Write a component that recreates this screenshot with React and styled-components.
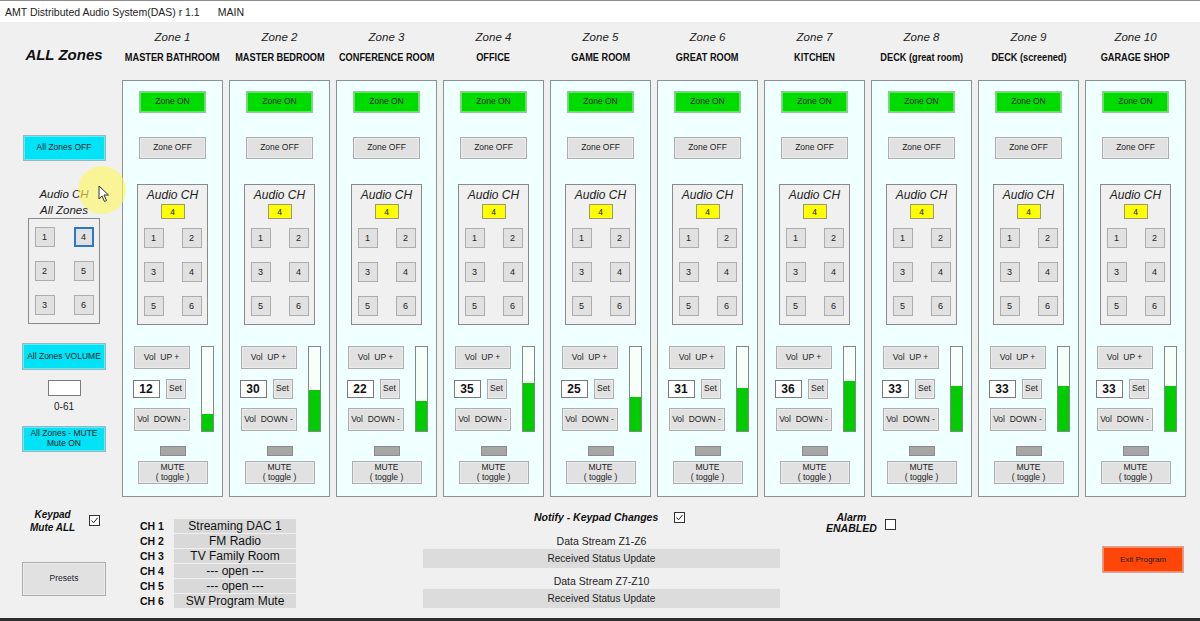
import React from "react";
import styled, { createGlobalStyle, css } from "styled-components";

const GlobalStyle = createGlobalStyle`
  html, body {
    margin: 0;
    padding: 0;
    background: #f0f0f0;
  }
  * {
    box-sizing: border-box;
  }
`;

const UI_FONT = `"Liberation Sans", Arial, sans-serif`;

const zones = [
  { name: "MASTER BATHROOM", vol: 12 },
  { name: "MASTER BEDROOM", vol: 30 },
  { name: "CONFERENCE ROOM", vol: 22 },
  { name: "OFFICE", vol: 35 },
  { name: "GAME ROOM", vol: 25 },
  { name: "GREAT ROOM", vol: 31 },
  { name: "KITCHEN", vol: 36 },
  { name: "DECK (great room)", vol: 33 },
  { name: "DECK (screened)", vol: 33 },
  { name: "GARAGE SHOP", vol: 33 },
];

const channels = [
  "Streaming DAC 1",
  "FM Radio",
  "TV Family Room",
  "--- open ---",
  "--- open ---",
  "SW Program Mute",
];

const Window = styled.div`
  position: relative;
  width: 1200px;
  height: 621px;
  overflow: hidden;
  background: #f0f0f0;
  border-bottom: 3px solid #2e2e2e;
  font-family: ${UI_FONT};
  color: #111;
`;

const TitleBar = styled.div`
  display: flex;
  align-items: center;
  height: 22px;
  padding-left: 5px;
  background: #fff;
  border-top: 1px solid #8c8c8c;
  font-size: 10.5px;
  color: #222;

  span + span {
    margin-left: 18px;
  }
`;

const Main = styled.div`
  display: flex;
  height: 475px;
`;

/* ---------- buttons ---------- */

const tones = {
  gray: css`
    background: #e1e1e1;
    border-color: #adadad;
  `,
  green: css`
    background: #00dc00;
    border-color: #9cc49c;
  `,
  cyan: css`
    background: #00e3f7;
    border-color: #9fb4b8;
  `,
  orange: css`
    background: #ff4608;
    border-color: #c9a79c;
  `,
};

const Button = styled.div`
  display: flex;
  align-items: center;
  justify-content: center;
  flex-direction: column;
  width: ${(p) => p.$w}px;
  height: ${(p) => p.$h}px;
  border: 1px solid;
  box-shadow: inset 0 0 0 1px rgba(255, 255, 255, 0.35);
  font-size: ${(p) => p.$fs || 8.5}px;
  line-height: 1.15;
  color: #222;
  white-space: pre;
  text-align: center;
  ${(p) => tones[p.$tone || "gray"]}
`;

const NumButton = styled.div`
  display: flex;
  align-items: center;
  justify-content: center;
  width: 20px;
  height: 20px;
  background: #e1e1e1;
  border: 1px solid ${(p) => (p.$selected ? "#2a78c9" : "#adadad")};
  box-shadow: ${(p) => (p.$selected ? "inset 0 0 0 1px #2a78c9" : "none")};
  font-size: 9px;
  color: #222;
`;

const NumGrid = styled.div`
  display: grid;
  grid-template-columns: 20px 20px;
  grid-auto-rows: 20px;
  column-gap: ${(p) => p.$colGap}px;
  row-gap: 14px;
  justify-content: center;
`;

/* ---------- sidebar ---------- */

const Sidebar = styled.div`
  display: flex;
  flex-direction: column;
  align-items: center;
  width: 122px;
  padding-left: 6px;
  flex-shrink: 0;
`;

const AllZonesTitle = styled.div`
  margin-top: 24px;
  height: 18px;
  font-size: 15px;
  font-weight: bold;
  font-style: italic;
  line-height: 18px;
`;

const Caption = styled.div`
  font-size: ${(p) => p.$fs || 12}px;
  font-style: italic;
  line-height: ${(p) => p.$lh || 16}px;
  text-align: center;
  color: #222;
`;

const ChannelBox = styled.div`
  width: ${(p) => p.$w}px;
  height: ${(p) => p.$h}px;
  border: 1px solid #8a8a8a;
  background: #f0f0f0;
  padding-top: ${(p) => p.$pt}px;
  display: flex;
  flex-direction: column;
  align-items: center;
`;

const Gap = styled.div`
  height: ${(p) => p.$h}px;
  flex-shrink: 0;
`;

const TextBox = styled.div`
  display: flex;
  align-items: center;
  justify-content: center;
  width: ${(p) => p.$w}px;
  height: ${(p) => p.$h}px;
  background: #fff;
  border: 1px solid #7a7a7a;
  font-size: 12px;
  font-weight: bold;
`;

const SmallText = styled.div`
  font-size: 10px;
  line-height: 12px;
  color: #222;
`;

/* ---------- zones ---------- */

const ZoneGrid = styled.div`
  display: grid;
  grid-template-columns: repeat(10, 101px);
  column-gap: 6px;
`;

const ZoneColumn = styled.div`
  display: flex;
  flex-direction: column;
  align-items: center;
`;

const ZoneHeader = styled.div`
  display: flex;
  flex-direction: column;
  align-items: center;
  height: 58px;
  padding-top: 8px;
`;

const ZoneNumber = styled.div`
  font-size: 11.5px;
  font-style: italic;
  line-height: 14px;
  color: #222;
`;

/* the app uses a condensed bold face; squeeze Liberation Sans to match */
const ZoneName = styled.div`
  margin-top: 6px;
  font-size: 11.5px;
  font-weight: bold;
  line-height: 14px;
  white-space: nowrap;
  transform: scaleX(0.8);
`;

const ZonePanel = styled.div`
  display: flex;
  flex-direction: column;
  align-items: center;
  width: 101px;
  height: 417px;
  padding-top: 10px;
  background: #f0ffff;
  border: 1px solid #8a9292;
`;

const YellowBox = styled.div`
  display: flex;
  align-items: center;
  justify-content: center;
  width: 24px;
  height: 15px;
  margin-top: 1px;
  background: #ffff00;
  border: 1px solid #9a9a7a;
  font-size: 8.5px;
`;

const VolArea = styled.div`
  display: flex;
  gap: 11px;
  margin-left: 1px;
`;

const VolButtons = styled.div`
  display: flex;
  flex-direction: column;
  align-items: flex-end;
  width: 57px;
`;

const SetRow = styled.div`
  display: flex;
  align-items: center;
  gap: 6px;
  margin: 10px 4px 9px 0;
  align-self: flex-start;
`;

const VolBar = styled.div`
  display: flex;
  flex-direction: column;
  justify-content: flex-end;
  width: 13px;
  height: 86px;
  background: #f7fffb;
  border: 1px solid #7f8a86;
`;

const VolFill = styled.div`
  width: 100%;
  background: #00cc00;
`;

const MuteLamp = styled.div`
  width: 26px;
  height: 10px;
  margin-top: 14px;
  background: #a6a6a6;
  border: 1px solid #8b8b8b;
`;

/* ---------- bottom ---------- */

const Bottom = styled.div`
  display: flex;
  align-items: flex-start;
  height: 121px;
`;

const BottomLeft = styled.div`
  display: flex;
  flex-direction: column;
  width: 122px;
  padding-left: 22px;
  flex-shrink: 0;
`;

const CheckRow = styled.div`
  display: flex;
  align-items: flex-start;
  gap: ${(p) => p.$gap}px;
  margin-top: ${(p) => p.$mt}px;
  padding-left: ${(p) => p.$pl || 0}px;
`;

const BoldItalic = styled.div`
  font-size: ${(p) => p.$fs || 10.5}px;
  font-weight: bold;
  font-style: italic;
  line-height: ${(p) => p.$lh || 13}px;
  text-align: center;
  white-space: nowrap;
`;

const CheckBox = styled.div`
  display: flex;
  align-items: center;
  justify-content: center;
  width: 11px;
  height: 11px;
  margin-top: ${(p) => p.$mt}px;
  background: #fff;
  border: 1px solid #333;
`;

const ChannelList = styled.div`
  display: flex;
  flex-direction: column;
  gap: 1px;
  margin: 22px 0 0 18px;
`;

const ChannelRow = styled.div`
  display: flex;
  align-items: center;
  height: 14px;
`;

const ChannelLabel = styled.div`
  width: 34px;
  font-size: 10.5px;
  font-weight: bold;
`;

const ChannelName = styled.div`
  width: 122px;
  height: 14px;
  background: #d9d9d9;
  font-size: 12px;
  line-height: 14px;
  text-align: center;
`;

const DataColumn = styled.div`
  display: flex;
  flex-direction: column;
  width: 357px;
  margin-left: 127px;
`;

const DataLabel = styled.div`
  margin-top: ${(p) => p.$mt}px;
  font-size: 10.5px;
  line-height: 13px;
  text-align: center;
  color: #222;
`;

const DataBox = styled.div`
  height: 19px;
  margin-top: 1px;
  background: #dcdcdc;
  font-size: 10px;
  line-height: 19px;
  text-align: center;
  color: #222;
`;

const ExitWrap = styled.div`
  margin: 49px 16px 0 auto;
`;

/* ---------- cursor highlight ---------- */

const CursorHalo = styled.div`
  position: absolute;
  left: 78px;
  top: 166px;
  width: 48px;
  height: 48px;
  border-radius: 50%;
  background: rgba(255, 246, 90, 0.6);
  pointer-events: none;
`;

const CursorArrow = styled.svg`
  position: absolute;
  left: 98px;
  top: 185px;
  pointer-events: none;
`;

function Check({ on }) {
  return (
    <svg width="9" height="9" viewBox="0 0 9 9">
      {on && <path d="M1.5 4.5 L3.6 6.8 L7.6 1.8" fill="none" stroke="#222" strokeWidth="1" />}
    </svg>
  );
}

function Zone({ index, name, vol }) {
  return (
    <ZoneColumn>
      <ZoneHeader>
        <ZoneNumber>Zone {index}</ZoneNumber>
        <ZoneName>{name}</ZoneName>
      </ZoneHeader>
      <ZonePanel>
        <Button $tone="green" $w={67} $h={22}>Zone ON</Button>
        <Gap $h={24} />
        <Button $w={67} $h={22}>Zone OFF</Button>
        <Gap $h={25} />
        <ChannelBox $w={71} $h={141} $pt={2}>
          <Caption $lh={16}>Audio CH</Caption>
          <YellowBox>4</YellowBox>
          <Gap $h={9} />
          <NumGrid $colGap={18}>
            {[1, 2, 3, 4, 5, 6].map((n) => (
              <NumButton key={n}>{n}</NumButton>
            ))}
          </NumGrid>
        </ChannelBox>
        <Gap $h={21} />
        <VolArea>
          <VolButtons>
            <Button $w={56} $h={23}>{"Vol  UP +"}</Button>
            <SetRow>
              <TextBox $w={27} $h={18}>{vol}</TextBox>
              <Button $w={20} $h={20}>Set</Button>
            </SetRow>
            <Button $w={56} $h={23}>{"Vol  DOWN -"}</Button>
          </VolButtons>
          <VolBar>
            <VolFill style={{ height: `${Math.round((vol / 61) * 84)}px` }} />
          </VolBar>
        </VolArea>
        <MuteLamp />
        <Gap $h={5} />
        <Button $w={70} $h={23}>{"MUTE\n( toggle )"}</Button>
      </ZonePanel>
    </ZoneColumn>
  );
}

export default function App() {
  return (
    <>
      <GlobalStyle />
      <Window>
        <TitleBar>
          <span>AMT Distributed Audio System(DAS) r 1.1</span>
          <span>MAIN</span>
        </TitleBar>

        <Main>
          <Sidebar>
            <AllZonesTitle>ALL Zones</AllZonesTitle>
            <Gap $h={71} />
            <Button $tone="cyan" $w={83} $h={26}>All Zones OFF</Button>
            <Gap $h={25} />
            <Caption $fs={11.5}>Audio CH</Caption>
            <Caption $fs={11.5}>All Zones</Caption>
            <ChannelBox $w={72} $h={106} $pt={8}>
              <NumGrid $colGap={19}>
                {[1, 4, 2, 5, 3, 6].map((n) => (
                  <NumButton key={n} $selected={n === 4}>{n}</NumButton>
                ))}
              </NumGrid>
            </ChannelBox>
            <Gap $h={19} />
            <Button $tone="cyan" $w={84} $h={27}>All Zones VOLUME</Button>
            <Gap $h={10} />
            <TextBox $w={33} $h={16} />
            <Gap $h={5} />
            <SmallText>0-61</SmallText>
            <Gap $h={13} />
            <Button $tone="cyan" $w={84} $h={26}>{"All Zones - MUTE\nMute ON"}</Button>
          </Sidebar>

          <ZoneGrid>
            {zones.map((z, i) => (
              <Zone key={z.name} index={i + 1} name={z.name} vol={z.vol} />
            ))}
          </ZoneGrid>
        </Main>

        <Bottom>
          <BottomLeft>
            <CheckRow $gap={14} $mt={11} $pl={8}>
              <BoldItalic $fs={10}>
                Keypad
                <br />
                Mute ALL
              </BoldItalic>
              <CheckBox $mt={7}>
                <Check on />
              </CheckBox>
            </CheckRow>
            <Gap $h={28} />
            <Button $w={84} $h={34}>Presets</Button>
          </BottomLeft>

          <ChannelList>
            {channels.map((c, i) => (
              <ChannelRow key={i}>
                <ChannelLabel>CH {i + 1}</ChannelLabel>
                <ChannelName>{c}</ChannelName>
              </ChannelRow>
            ))}
          </ChannelList>

          <DataColumn>
            <CheckRow $gap={16} $mt={14} $pl={111}>
              <BoldItalic>Notify - Keypad Changes</BoldItalic>
              <CheckBox $mt={1}>
                <Check on />
              </CheckBox>
            </CheckRow>
            <DataLabel $mt={11}>Data Stream Z1-Z6</DataLabel>
            <DataBox>Received Status Update</DataBox>
            <DataLabel $mt={7}>Data Stream Z7-Z10</DataLabel>
            <DataBox>Received Status Update</DataBox>
          </DataColumn>

          <CheckRow $gap={8} $mt={15} $pl={46}>
            <BoldItalic $lh={11}>
              Alarm
              <br />
              ENABLED
            </BoldItalic>
            <CheckBox $mt={7}>
              <Check />
            </CheckBox>
          </CheckRow>

          <ExitWrap>
            <Button $tone="orange" $w={82} $h={27} $fs={8}>Exit Program</Button>
          </ExitWrap>
        </Bottom>

        <CursorHalo />
        <CursorArrow width="12" height="18" viewBox="0 0 12 18">
          <path d="M1 1 L1 14 L4 11 L6.5 16.5 L8.5 15.5 L6 10 L10.5 10 Z" fill="#fff" stroke="#333" strokeWidth="1" />
        </CursorArrow>
      </Window>
    </>
  );
}
